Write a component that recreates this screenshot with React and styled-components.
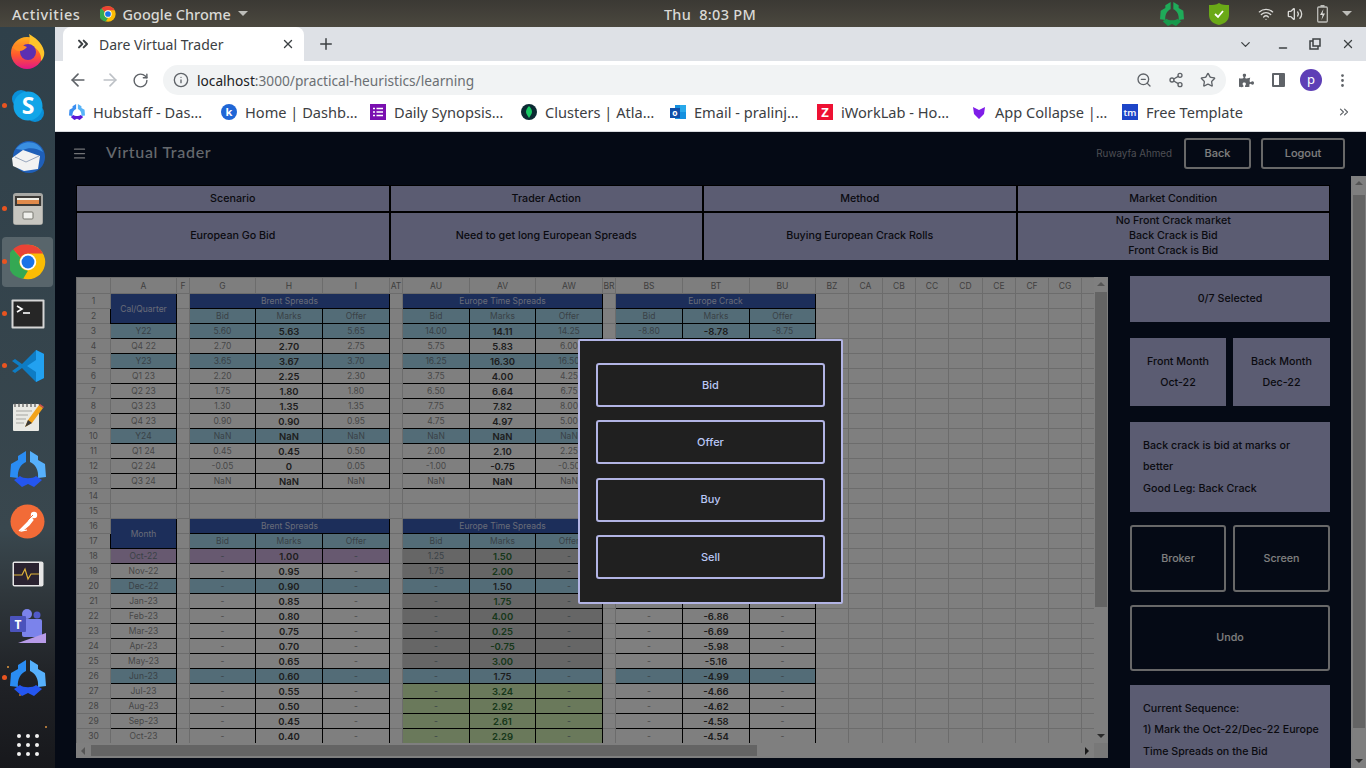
import React from "react";
import styled, { createGlobalStyle } from "styled-components";
import {
  ArrowLeft,
  ArrowRight,
  ChevronDown,
  ChevronsRight,
  Info,
  Menu,
  Minus,
  MoreVertical,
  Plus,
  RotateCw,
  Share2,
  Star,
  Volume2,
  Wifi,
  X,
  ZoomOut,
} from "lucide-react";
import { FaPuzzlePiece } from "react-icons/fa";

const GlobalStyle = createGlobalStyle`
  html, body {
    margin: 0;
    padding: 0;
    width: 1366px;
    height: 768px;
    overflow: hidden;
    background: #000;
  }
  * { box-sizing: border-box; }
`;

const UI_FONT = `"Noto Sans", "Open Sans", sans-serif`;
const APP_FONT = `Inter, "Liberation Sans", sans-serif`;

/* ---------- desktop shell ---------- */

const Desktop = styled.div`
  width: 1366px;
  height: 768px;
  display: grid;
  grid-template-columns: 55px 1fr;
  grid-template-rows: 27px 1fr;
  overflow: hidden;
`;

const TopBar = styled.div`
  grid-column: 1 / 3;
  display: grid;
  grid-template-columns: 1fr auto 1fr;
  align-items: center;
  background: linear-gradient(#3b3934, #4b483f);
  color: #d9d9d6;
  font: 500 14.5px ${UI_FONT};
  padding: 0 12px;
`;

const BarLeft = styled.div`
  display: flex;
  align-items: center;
`;

const Activities = styled.span`
  letter-spacing: 0.6px;
`;

const AppMenu = styled.div`
  display: flex;
  align-items: center;
  gap: 6px;
  margin-left: 20px;
`;

const Clock = styled.div`
  letter-spacing: 0.3px;
  padding-left: 54px;
`;

const Tray = styled.div`
  display: flex;
  align-items: center;
  justify-content: flex-end;
  padding-right: 2px;
`;

/* spacing between loose icons in a bar */
const Spaced = styled.span`
  display: flex;
  flex: none;
  margin-left: ${(p) => p.$gap}px;
`;

const Caret = styled.span`
  width: 0;
  height: 0;
  border-left: 5px solid transparent;
  border-right: 5px solid transparent;
  border-top: 5px solid #bdbdb9;
  margin-left: ${(p) => p.$gap || 1}px;
`;

const Dock = styled.div`
  display: flex;
  flex-direction: column;
  gap: 4.25px;
  position: relative;
  background:
    radial-gradient(circle at 8px 640px, #b07a3a 0 1px, transparent 1.4px),
    radial-gradient(circle at 46px 700px, #a8743a 0 1px, transparent 1.4px),
    radial-gradient(circle at 20px 668px, #8c6232 0 1px, transparent 1.4px),
    radial-gradient(circle at 38px 612px, #8c6232 0 1px, transparent 1.4px),
    linear-gradient(#2f404a 0, #39474e 68%, #30383d 76%, #202226 88%, #17181c 100%);
`;

const DockSlot = styled.div`
  position: relative;
  height: 48px;
  flex: none;
  display: flex;
  align-items: center;
  justify-content: center;
  border-radius: 4px;
  margin: ${(p) => p.$shift || 0}px 2px 0 2px;
  background: ${(p) => (p.$active ? "#58656b" : "transparent")};
  box-shadow: ${(p) => (p.$active ? "0 -1px 0 #58656b, 0 1px 0 #58656b" : "none")};
  &::before {
    content: ${(p) => (p.$running ? '""' : "none")};
    position: absolute;
    left: 0;
    top: 21px;
    width: 5px;
    height: 5px;
    border-radius: 50%;
    background: #e95420;
  }
`;

const AppGrid = styled.div`
  display: grid;
  grid-template-columns: repeat(3, 4px);
  gap: 5px;
  justify-content: center;
  margin-top: auto;
  margin-bottom: 12px;
  span {
    width: 4px;
    height: 4px;
    border-radius: 50%;
    background: #f2f2f2;
  }
`;

/* ---------- browser chrome ---------- */

const Browser = styled.div`
  display: flex;
  flex-direction: column;
  min-width: 0;
  min-height: 0;
`;

const TabStrip = styled.div`
  height: 34px;
  flex: none;
  background: #dee1e6;
  display: flex;
  align-items: center;
  padding-left: 8px;
  color: #3c4043;
`;

const Tab = styled.div`
  width: 241px;
  height: 34px;
  background: #fff;
  border-radius: 8px 8px 0 0;
  display: flex;
  align-items: center;
  padding: 0 9px 0 12px;
  font: 14px ${UI_FONT};
  gap: 8px;
`;

const TabTitle = styled.span`
  flex: 1;
  white-space: nowrap;
`;

const NewTab = styled.div`
  margin-left: 13px;
  display: flex;
`;

const WindowControls = styled.div`
  margin-left: auto;
  display: flex;
  align-items: center;
  padding-right: 11px;
`;

const MinimizeGlyph = styled.span`
  display: flex;
  margin-top: 7px;
`;

const Toolbar = styled.div`
  height: 38px;
  flex: none;
  background: #fff;
  display: flex;
  align-items: flex-start;
  padding: 4px 0 0 13px;
  color: #5f6368;
`;

const NavGroup = styled.div`
  display: flex;
  align-items: center;
  gap: 12px;
  height: 30px;
  width: 95px;
  flex: none;
`;

const Omnibox = styled.div`
  width: 1063px;
  height: 30px;
  flex: none;
  border-radius: 15px;
  background: #f1f3f4;
  display: flex;
  align-items: center;
  padding: 0 10px;
  font: 13.7px ${UI_FONT};
  gap: 8px;
`;

const Url = styled.div`
  flex: 1;
  color: #6b6f73;
  white-space: nowrap;
  b {
    font-weight: 400;
    color: #202124;
  }
`;

const OmniActions = styled.div`
  display: flex;
  gap: 16px;
  align-items: center;
  color: #5f6368;
`;

const ExtGroup = styled.div`
  display: flex;
  align-items: center;
  height: 30px;
`;

const SidePanelGlyph = styled.span`
  width: 13px;
  height: 14px;
  border: 2px solid #5f6368;
  border-right-width: 6px;
  border-radius: 1px;
`;

const Avatar = styled.span`
  width: 22px;
  height: 22px;
  border-radius: 50%;
  background: #5e3fb6;
  color: #fff;
  font: 13px/21px ${UI_FONT};
  text-align: center;
`;

const Bookmarks = styled.div`
  height: 33px;
  flex: none;
  background: #fff;
  border-bottom: 1px solid #d8dade;
  display: flex;
  align-items: center;
  padding: 0 15px 6px 14px;
  gap: 16px;
  color: #3c4043;
  font: 14.6px ${UI_FONT};
`;

const Bookmark = styled.div`
  display: flex;
  align-items: center;
  gap: 8px;
  flex: none;
`;

const BookmarkText = styled.span`
  display: block;
  white-space: nowrap;
  width: ${(p) => p.$w}px;
`;

const MoreBookmarks = styled.div`
  margin-left: auto;
  display: flex;
  color: #5f6368;
`;

/* ---------- the page ---------- */

const Page = styled.div`
  position: relative;
  flex: 1;
  min-height: 0;
  overflow: hidden;
  background: #0a142a;
  font-family: ${APP_FONT};
  display: flex;
  flex-direction: column;
`;

const AppHeader = styled.header`
  height: 44px;
  flex: none;
  display: flex;
  align-items: center;
  padding: 0 21px 2px 17px;
  color: #e6e8ee;
`;

const HeaderTitle = styled.div`
  font: 500 16px Lato, ${APP_FONT};
  letter-spacing: 0.7px;
  margin-left: 19px;
  margin-top: -3px;
  color: #ccd2dc;
`;

const UserName = styled.div`
  margin-left: auto;
  font-size: 9.8px;
  color: #9a9da6;
`;

const HeaderButton = styled.div`
  width: ${(p) => p.$w}px;
  height: 31px;
  margin-left: ${(p) => p.$gap}px;
  border: 2px solid #d0d0d0;
  border-radius: 3px;
  display: flex;
  align-items: center;
  justify-content: center;
  font-size: 11px;
  font-weight: 500;
  color: #fff;
`;

const PageBody = styled.div`
  flex: 1;
  min-height: 0;
  display: flex;
`;

const Scroller = styled.div`
  flex: 1;
  min-width: 0;
  padding: 9px 21px 0 21px;
  overflow: hidden;
`;

const ScrollTrack = styled.div`
  flex: ${(p) => (p.$horizontal ? 1 : "none")};
  width: ${(p) => (p.$horizontal ? "auto" : p.$wide ? "15px" : "14px")};
  height: ${(p) => (p.$horizontal ? "15px" : "auto")};
  background: #fff;
  display: flex;
  flex-direction: ${(p) => (p.$horizontal ? "row" : "column")};
  align-items: center;
  justify-content: space-between;
  padding: ${(p) => (p.$horizontal ? "0 5px" : "5px 0")};
  position: relative;
`;

const ScrollThumb = styled.div`
  position: absolute;
  background: #c8c8c8;
  left: ${(p) => p.$left};
  right: ${(p) => p.$right};
  top: ${(p) => p.$top};
  bottom: ${(p) => p.$bottom};
`;

const Arrow = styled.span`
  width: 0;
  height: 0;
  ${(p) =>
    p.$dir === "up" &&
    "border-left:4px solid transparent;border-right:4px solid transparent;border-bottom:4px solid #aaa;"}
  ${(p) =>
    p.$dir === "down" &&
    "border-left:4px solid transparent;border-right:4px solid transparent;border-top:4px solid #555;"}
  ${(p) =>
    p.$dir === "left" &&
    "border-top:4px solid transparent;border-bottom:4px solid transparent;border-right:4px solid #aaa;"}
  ${(p) =>
    p.$dir === "right" &&
    "border-top:4px solid transparent;border-bottom:4px solid transparent;border-left:4px solid #333;"}
`;

const InfoGrid = styled.div`
  display: grid;
  grid-template-columns: repeat(4, 1fr);
  grid-template-rows: 25px 47px;
  gap: 2px;
  padding: 1px;
  background: #000;
  width: 1254px;
  height: 75px;
`;

const InfoCell = styled.div`
  background: #b6b8e4;
  color: #15151f;
  display: flex;
  align-items: center;
  justify-content: center;
  text-align: center;
  font-size: 10.7px;
  font-weight: 500;
  line-height: 15px;
  padding-bottom: ${(p) => (p.$body ? 2 : 0)}px;
`;

const Workspace = styled.div`
  display: flex;
  gap: 22px;
  margin-top: 16px;
  width: 1254px;
`;

const Sheet = styled.div`
  width: 1032px;
  height: 481px;
  margin-top: 1px;
  flex: none;
  display: flex;
  flex-direction: column;
  background: #fff;
`;

const SheetTop = styled.div`
  display: flex;
  height: 466px;
`;

const SheetViewport = styled.div`
  width: 1018px;
  height: 466px;
  overflow: hidden;
`;

const SheetBottom = styled.div`
  display: flex;
  height: 15px;
  width: 1032px;
`;

const Corner = styled.div`
  width: 14px;
  background: #f0f0f0;
`;

const Grid = styled.table`
  border-collapse: collapse;
  table-layout: fixed;
  width: 1018px;
  font-family: ${APP_FONT};
  font-size: 8.5px;
`;

const ColHead = styled.th`
  height: 16px;
  padding: 0;
  font-weight: 400;
  font-size: 8.5px;
  color: #808080;
  background: #fdfdfd;
  border: 1px solid #d9d9d9;
  overflow: hidden;
  white-space: nowrap;
  text-align: center;
`;

const RowHead = styled.td`
  height: 15px;
  padding: 0;
  text-align: center;
  color: #8a8a8a;
  font-size: 8.5px;
  background: #fdfdfd;
  border: 1px solid #d9d9d9;
`;

const TONES = {
  navy: "#395cb4",
  teal: "#a6d9ef",
  purple: "#cfb2e0",
  dark: "#cccccc",
  green: "#d4f3b6",
};

const Cell = styled.td`
  height: 15px;
  padding: 0;
  text-align: center;
  white-space: nowrap;
  overflow: hidden;
  border: 1px solid ${(p) => (p.$boxed ? "#000" : "#d9d9d9")};
  background: ${(p) => TONES[p.$tone] || "#fff"};
  color: ${(p) =>
    p.$tone === "navy" ? "#cfd6ee" : p.$bold ? "#3c3c3c" : p.$tone ? "#74848e" : "#909090"};
  font-weight: ${(p) => (p.$bold ? 600 : 400)};
  font-size: ${(p) => (p.$bold ? "9.5px" : "8.5px")};
  ${(p) => p.$greenText && "color:#2f6f35;"}
`;

const SidePanel = styled.aside`
  width: 200px;
  flex: none;
  display: flex;
  flex-direction: column;
  font-size: 10.7px;
  font-weight: 500;
`;

const PanelRow = styled.div`
  display: grid;
  grid-template-columns: 96px 97px;
  gap: 7px;
  flex: none;
  margin-bottom: ${(p) => p.$after}px;
`;

const PanelCard = styled.div`
  flex: none;
  height: ${(p) => p.$h}px;
  margin-bottom: ${(p) => p.$after || 0}px;
  padding-bottom: ${(p) => p.$lift || 0}px;
  background: #b6b8e4;
  color: #15151f;
  display: flex;
  flex-direction: column;
  align-items: center;
  justify-content: center;
  line-height: 21px;
`;

const PanelNote = styled.div`
  height: ${(p) => p.$h}px;
  flex: none;
  margin-bottom: ${(p) => p.$after || 0}px;
  background: #b6b8e4;
  color: #15151f;
  padding: ${(p) => p.$pad}px 8px 0 13px;
  line-height: 21.5px;
`;

const PanelButton = styled.div`
  flex: none;
  height: ${(p) => p.$h}px;
  margin-bottom: ${(p) => p.$after || 0}px;
  border: 2px solid #d0d0d0;
  border-radius: 3px;
  color: #fff;
  display: flex;
  align-items: center;
  justify-content: center;
  padding-bottom: 1px;
`;

const Backdrop = styled.div`
  position: absolute;
  inset: 0;
  background: rgba(0, 0, 0, 0.5);
  display: flex;
  justify-content: center;
  align-items: flex-start;
  padding-top: 207px;
`;

const Modal = styled.div`
  width: 265px;
  height: 265px;
  background: #202020;
  border: 2px solid #b2b4e4;
  border-radius: 2px;
  padding: 22px 16px;
  display: flex;
  flex-direction: column;
  gap: 13.4px;
`;

const ModalButton = styled.div`
  height: 44px;
  flex: none;
  border: 2px solid #b2b4e4;
  border-radius: 3px;
  display: flex;
  align-items: center;
  justify-content: center;
  padding-bottom: 1px;
  color: #bac7f5;
  font-size: 11px;
  font-weight: 500;
`;

/* ---------- drawn icons ---------- */

const ChromeLogo = ({ size }) => (
  <svg width={size} height={size} viewBox="0 0 48 48">
    <circle cx="24" cy="24" r="23" fill="#fbbc04" />
    <path d="M24 1a23 23 0 0 1 20 11.5H24a11.5 11.5 0 0 0-10 5.8L4 6.9A23 23 0 0 1 24 1z" fill="#ea4335" />
    <path d="M4 6.9l10 11.4a11.5 11.5 0 0 0 10 17.2L17.5 46.3A23 23 0 0 1 4 6.9z" fill="#34a853" />
    <circle cx="24" cy="24" r="11" fill="#fff" />
    <circle cx="24" cy="24" r="8.6" fill="#1a73e8" />
  </svg>
);

const HubLogo = ({ size, left = "#2a8cf2", right = "#56b0fb", bottom = "#2456f0" }) => (
  <svg width={size} height={size} viewBox="0 0 36 36">
    <path d="M16 0 L8 5 L8 9 L1 13 L0 26 L8 27 C7 19 11 13 16 11 Z" fill={left} />
    <path d="M20 0 L28 5 L28 9 L35 13 L36 26 L28 27 C29 19 25 13 20 11 Z" fill={right} />
    <path d="M4 29 L10 25 C13 28 23 28 26 25 L32 29 L24 36 L18 33 L12 36 Z" fill={bottom} />
  </svg>
);

const dockApps = [
  {
    key: "firefox",
    icon: (
      <svg width="36" height="36" viewBox="0 0 36 36">
        <defs>
          <linearGradient id="ff" x1="0" y1="0" x2="0" y2="1">
            <stop offset="0" stopColor="#ffb01f" />
            <stop offset="0.55" stopColor="#ff5a2c" />
            <stop offset="1" stopColor="#e31587" />
          </linearGradient>
        </defs>
        <circle cx="17" cy="20" r="16" fill="url(#ff)" />
        <path d="M19 1c5 3 13 8 15 17 1 4-1 8-3 10 1-8-4-13-12-17 1-3 1-7 0-10z" fill="#ffc42a" />
        <circle cx="18" cy="19" r="8" fill="#5c2fb2" />
        <path d="M3 14c5-3 10-2 14 0-2 2-4 4-8 4-3 0-5-2-6-4z" fill="#ff8b1f" />
      </svg>
    ),
  },
  {
    key: "skype",
    running: true,
    shift: 3,
    icon: (
      <svg width="34" height="34" viewBox="0 0 34 34">
        <circle cx="10" cy="10" r="9" fill="#0a8fd8" />
        <circle cx="24" cy="24" r="9" fill="#0a8fd8" />
        <circle cx="17" cy="17" r="14.5" fill="#12a5e8" />
        <text x="17" y="25" textAnchor="middle" fontSize="23" fontWeight="700" fill="#fff" fontFamily="Open Sans">S</text>
      </svg>
    ),
  },
  {
    key: "thunderbird",
    shift: -1.5,
    icon: (
      <svg width="36" height="36" viewBox="0 0 36 36">
        <circle cx="19" cy="18" r="16" fill="#1f5fb8" />
        <path d="M6 10c6-9 22-10 27 3-6-4-14-5-20-2z" fill="#3a8fe0" />
        <path d="M2 19l11-8 17 6-2 13-14 2-11-5z" fill="#f2f2f2" />
        <path d="M5 18l11 5 13-6" fill="none" stroke="#9aa7bd" strokeWidth="1" />
      </svg>
    ),
  },
  {
    key: "files",
    running: true,
    icon: (
      <svg width="34" height="34" viewBox="0 0 34 34">
        <rect x="2" y="1" width="30" height="32" rx="3" fill="#a8a8a4" />
        <rect x="4" y="4" width="26" height="10" fill="#3d3a36" />
        <rect x="6" y="6" width="22" height="2" fill="#f0f0e8" />
        <rect x="6" y="8" width="22" height="4" fill="#e08a4a" />
        <rect x="3" y="14" width="28" height="18" fill="#c7c6c0" />
        <rect x="12" y="20" width="10" height="7" rx="1" fill="#f0f0ec" stroke="#77776f" />
      </svg>
    ),
  },
  { key: "chrome", running: true, active: true, icon: <ChromeLogo size={36} /> },
  {
    key: "terminal",
    running: true,
    icon: (
      <svg width="34" height="30" viewBox="0 0 34 30">
        <rect x="0.5" y="0.5" width="33" height="29" rx="1" fill="#d6d6d6" />
        <rect x="2.5" y="2.5" width="29" height="25" fill="#262626" />
        <path d="M6 7l5 3-5 3" fill="none" stroke="#fff" strokeWidth="1.6" />
        <path d="M12 14h7" stroke="#fff" strokeWidth="1.6" />
      </svg>
    ),
  },
  {
    key: "vscode",
    running: true,
    icon: (
      <svg width="34" height="34" viewBox="0 0 34 34">
        <path d="M25 1L11 15 4 10 1 12l7 5-7 5 3 2 7-5 14 14 8-4V5z" fill="#0e7cc4" />
        <path d="M25 1l8 4v24l-8 4V23l-9-6 9-6z" fill="#22a1f0" />
      </svg>
    ),
  },
  {
    key: "editor",
    shift: -1.5,
    icon: (
      <svg width="34" height="34" viewBox="0 0 34 34">
        <rect x="2" y="4" width="26" height="27" rx="1" fill="#e9e9e4" />
        <path d="M4 3v4M8 3v4M12 3v4M16 3v4M20 3v4M24 3v4" stroke="#555" strokeWidth="1.2" />
        <path d="M5 11h16M5 15h12M5 19h10M5 23h8" stroke="#a5a5a0" strokeWidth="1" />
        <path d="M14 27l3-7L28 5l4 3-11 15z" fill="#f2a31b" />
        <path d="M28 5l1-1 4 3-1 1z" fill="#d9534f" />
        <path d="M14 27l3-7 4 3z" fill="#3a3a3a" />
      </svg>
    ),
  },
  { key: "hubstaff", icon: <HubLogo size={36} /> },
  {
    key: "postman",
    icon: (
      <svg width="35" height="35" viewBox="0 0 35 35">
        <circle cx="17.5" cy="17.5" r="17" fill="#f26b37" />
        <path d="M9 27l9-9 3-5 2 3-4 5-7 6 5-1" fill="#fff" stroke="#fff" strokeWidth="1.2" />
        <circle cx="24" cy="11" r="3.2" fill="#fff" />
        <path d="M18 16l5-5" stroke="#f26b37" strokeWidth="1" />
      </svg>
    ),
  },
  {
    key: "sysmon",
    icon: (
      <svg width="32" height="26" viewBox="0 0 32 26">
        <rect x="0.5" y="0.5" width="31" height="25" rx="2" fill="#e6e6e6" />
        <rect x="2" y="2" width="25" height="22" fill="#2a2230" />
        <path d="M2 14h8l3-6 3 10 3-5h8" fill="none" stroke="#e0b43a" strokeWidth="1.2" />
      </svg>
    ),
  },
  {
    key: "teams",
    icon: (
      <svg width="36" height="34" viewBox="0 0 36 34">
        <circle cx="17" cy="5" r="5" fill="#7b83eb" />
        <circle cx="27" cy="6" r="3.5" fill="#5059c9" />
        <rect x="12" y="10" width="20" height="18" rx="2" fill="#7b83eb" />
        <rect x="0" y="7" width="16" height="16" rx="1" fill="#4b53bc" />
        <text x="8" y="20" textAnchor="middle" fontSize="12" fontWeight="700" fill="#fff" fontFamily="Open Sans">T</text>
        <path d="M8 34L36 24v10z" fill="#b79be8" />
      </svg>
    ),
  },
  { key: "hubstaff2", running: true, icon: <HubLogo size={36} /> },
];

const Shield = () => (
  <svg width="22" height="24" viewBox="0 0 22 24">
    <path d="M11 1c3 2 6 2 10 2v10c0 6-5 9-10 10C6 22 1 19 1 13V3c4 0 7 0 10-2z" fill="#6aa917" />
    <path d="M7 12l3 3 5-6" fill="none" stroke="#fff" strokeWidth="1.8" />
  </svg>
);

const Battery = () => (
  <svg width="11" height="18" viewBox="0 0 11 18">
    <rect x="0.7" y="2" width="9.6" height="15" rx="1" fill="none" stroke="#bdbdb9" strokeWidth="1.3" />
    <rect x="3.5" y="0" width="4" height="2" fill="#bdbdb9" />
    <path d="M6.5 4L3 10h2.5L4.5 15 8 8.5H5.5z" fill="#d9d9d6" />
  </svg>
);

const favicons = {
  hub: <HubLogo size={16} left="#3a8ef0" right="#58b4f8" bottom="#5a18d8" />,
  k: (
    <svg width="16" height="16" viewBox="0 0 16 16">
      <circle cx="8" cy="8" r="8" fill="#1f66d6" />
      <text x="8" y="12" textAnchor="middle" fontSize="11" fontWeight="700" fill="#fff" fontFamily="Open Sans">k</text>
    </svg>
  ),
  list: (
    <svg width="16" height="16" viewBox="0 0 16 16">
      <rect width="16" height="16" fill="#7a0fb0" />
      <path d="M3 4.5h2M6.5 4.5h6.5M3 8h2M6.5 8h6.5M3 11.5h2M6.5 11.5h6.5" stroke="#fff" strokeWidth="1.6" />
    </svg>
  ),
  mongo: (
    <svg width="16" height="16" viewBox="0 0 16 16">
      <circle cx="8" cy="8" r="8" fill="#0b2a33" />
      <path d="M8 2c2 2 3 4 3 6s-2 4-3 6c-1-2-3-4-3-6s1-4 3-6z" fill="#18c964" />
    </svg>
  ),
  outlook: (
    <svg width="16" height="16" viewBox="0 0 16 16">
      <rect x="5" y="1" width="11" height="14" fill="#1490df" />
      <rect x="10" y="1" width="6" height="7" fill="#28a8ea" />
      <rect x="0" y="4" width="10" height="10" fill="#0f4fa8" />
      <text x="5" y="12" textAnchor="middle" fontSize="8.5" fontWeight="700" fill="#fff" fontFamily="Open Sans">o</text>
    </svg>
  ),
  z: (
    <svg width="16" height="16" viewBox="0 0 16 16">
      <rect width="16" height="16" fill="#ee1133" />
      <text x="8" y="13" textAnchor="middle" fontSize="13" fontWeight="700" fill="#fff" fontFamily="Open Sans">Z</text>
    </svg>
  ),
  v: (
    <svg width="16" height="16" viewBox="0 0 16 16">
      <path d="M2 3l6 3 6-3-1 7-5 5-5-5z" fill="#7f1de8" />
    </svg>
  ),
  tm: (
    <svg width="16" height="16" viewBox="0 0 16 16">
      <rect width="16" height="16" fill="#1d45c8" />
      <text x="8" y="11.5" textAnchor="middle" fontSize="9.5" fontWeight="600" fill="#fff" fontFamily="Open Sans">tm</text>
    </svg>
  ),
};

const bookmarks = [
  ["hub", "Hubstaff - Das…", 112],
  ["k", "Home | Dashb…", 109],
  ["list", "Daily Synopsis…", 111],
  ["mongo", "Clusters | Atla…", 109],
  ["outlook", "Email - pralinj…", 107],
  ["z", "iWorkLab - Ho…", 114],
  ["v", "App Collapse |…", 111],
  ["tm", "Free Template", 97],
];

/* ---------- sheet data ---------- */

const COLS = [
  ["", 34], ["A", 66], ["F", 13], ["G", 66], ["H", 67], ["I", 67], ["AT", 13],
  ["AU", 67], ["AV", 66], ["AW", 67], ["BR", 13], ["BS", 67], ["BT", 67], ["BU", 66],
  ["BZ", 33], ["CA", 34], ["CB", 33], ["CC", 33], ["CD", 34], ["CE", 33], ["CF", 33], ["CG", 33], ["", 13],
];

const NAN = ["NaN", "NaN", "NaN"];
const quarters = [
  { label: "Y22", tone: "teal", brent: ["5.60", "5.63", "5.65"], time: ["14.00", "14.11", "14.25"], crack: ["-8.80", "-8.78", "-8.75"] },
  { label: "Q4 22", brent: ["2.70", "2.70", "2.75"], time: ["5.75", "5.83", "6.00"] },
  { label: "Y23", tone: "teal", brent: ["3.65", "3.67", "3.70"], time: ["16.25", "16.30", "16.50"] },
  { label: "Q1 23", brent: ["2.20", "2.25", "2.30"], time: ["3.75", "4.00", "4.25"] },
  { label: "Q2 23", brent: ["1.75", "1.80", "1.80"], time: ["6.50", "6.64", "6.75"] },
  { label: "Q3 23", brent: ["1.30", "1.35", "1.35"], time: ["7.75", "7.82", "8.00"] },
  { label: "Q4 23", brent: ["0.90", "0.90", "0.95"], time: ["4.75", "4.97", "5.00"] },
  { label: "Y24", tone: "teal", brent: NAN, time: NAN },
  { label: "Q1 24", brent: ["0.45", "0.45", "0.50"], time: ["2.00", "2.10", "2.25"] },
  { label: "Q2 24", brent: ["-0.05", "0", "0.05"], time: ["-1.00", "-0.75", "-0.50"] },
  { label: "Q3 24", brent: NAN, time: NAN },
];

const months = [
  { label: "Oct-22", tone: "purple", brent: "1.00", time: ["1.25", "1.50", "-"], timeTone: "dark", crack: "-" },
  { label: "Nov-22", brent: "0.95", time: ["1.75", "2.00", "-"], timeTone: "dark", crack: "-" },
  { label: "Dec-22", tone: "teal", brent: "0.90", time: ["-", "1.50", "-"], crack: "-" },
  { label: "Jan-23", brent: "0.85", time: ["-", "1.75", "-"], timeTone: "dark", crack: "-" },
  { label: "Feb-23", brent: "0.80", time: ["-", "4.00", "-"], timeTone: "dark", crack: "-6.86" },
  { label: "Mar-23", brent: "0.75", time: ["-", "0.25", "-"], timeTone: "dark", crack: "-6.69" },
  { label: "Apr-23", brent: "0.70", time: ["-", "-0.75", "-"], timeTone: "dark", crack: "-5.98" },
  { label: "May-23", brent: "0.65", time: ["-", "3.00", "-"], timeTone: "dark", crack: "-5.16" },
  { label: "Jun-23", tone: "teal", brent: "0.60", time: ["-", "1.75", "-"], crack: "-4.99" },
  { label: "Jul-23", brent: "0.55", time: ["-", "3.24", "-"], timeTone: "green", crack: "-4.66" },
  { label: "Aug-23", brent: "0.50", time: ["-", "2.92", "-"], timeTone: "green", crack: "-4.62" },
  { label: "Sep-23", brent: "0.45", time: ["-", "2.61", "-"], timeTone: "green", crack: "-4.58" },
  { label: "Oct-23", brent: "0.40", time: ["-", "2.29", "-"], timeTone: "green", crack: "-4.54" },
];

const Blanks = ({ n }) =>
  Array.from({ length: n }, (_, i) => <Cell key={i} />);

const Triple = ({ values = ["", "", ""], tone, timeTone }) => {
  const t = timeTone || tone;
  const green = timeTone === "green" || timeTone === "dark";
  return (
    <>
      <Cell $boxed $tone={t}>{values[0]}</Cell>
      <Cell $boxed $bold $tone={t} $greenText={green}>{values[1]}</Cell>
      <Cell $boxed $tone={t}>{values[2]}</Cell>
    </>
  );
};

const Banner = ({ title }) => (
  <Cell colSpan={3} $boxed $tone="navy">{title}</Cell>
);

const SubHead = () => (
  <>
    <Cell $boxed $tone="teal">Bid</Cell>
    <Cell $boxed $tone="teal">Marks</Cell>
    <Cell $boxed $tone="teal">Offer</Cell>
  </>
);

const SheetTable = () => (
  <Grid>
    <colgroup>
      {COLS.map(([, w], i) => (
        <col key={i} width={w} />
      ))}
    </colgroup>
    <thead>
      <tr>
        {COLS.map(([name], i) => (
          <ColHead key={i}>{name}</ColHead>
        ))}
      </tr>
    </thead>
    <tbody>
      <tr>
        <RowHead>1</RowHead>
        <Cell rowSpan={2} $boxed $tone="navy">Cal/Quarter</Cell>
        <Cell />
        <Banner title="Brent Spreads" />
        <Cell />
        <Banner title="Europe Time Spreads" />
        <Cell />
        <Banner title="Europe Crack" />
        <Blanks n={9} />
      </tr>
      <tr>
        <RowHead>2</RowHead>
        <Cell />
        <SubHead />
        <Cell />
        <SubHead />
        <Cell />
        <SubHead />
        <Blanks n={9} />
      </tr>
      {quarters.map((q, i) => (
        <tr key={q.label}>
          <RowHead>{i + 3}</RowHead>
          <Cell $boxed $tone={q.tone}>{q.label}</Cell>
          <Cell />
          <Triple values={q.brent} tone={q.tone} />
          <Cell />
          <Triple values={q.time} tone={q.tone} />
          <Cell />
          <Triple values={q.crack} tone={q.tone} />
          <Blanks n={9} />
        </tr>
      ))}
      {[14, 15].map((n) => (
        <tr key={n}>
          <RowHead>{n}</RowHead>
          <Blanks n={22} />
        </tr>
      ))}
      <tr>
        <RowHead>16</RowHead>
        <Cell rowSpan={2} $boxed $tone="navy">Month</Cell>
        <Cell />
        <Banner title="Brent Spreads" />
        <Cell />
        <Banner title="Europe Time Spreads" />
        <Cell />
        <Banner title="Europe Crack" />
        <Blanks n={9} />
      </tr>
      <tr>
        <RowHead>17</RowHead>
        <Cell />
        <SubHead />
        <Cell />
        <SubHead />
        <Cell />
        <SubHead />
        <Blanks n={9} />
      </tr>
      {months.map((m, i) => (
        <tr key={m.label}>
          <RowHead>{i + 18}</RowHead>
          <Cell $boxed $tone={m.tone}>{m.label}</Cell>
          <Cell />
          <Triple values={["-", m.brent, "-"]} tone={m.tone} />
          <Cell />
          <Triple values={m.time} tone={m.tone === "teal" ? "teal" : undefined} timeTone={m.timeTone} />
          <Cell />
          <Triple values={["-", m.crack, "-"]} tone={m.tone === "teal" ? "teal" : undefined} />
          <Blanks n={9} />
        </tr>
      ))}
    </tbody>
  </Grid>
);

export default function App() {
  return (
    <>
      <GlobalStyle />
      <Desktop>
        <TopBar>
          <BarLeft>
            <Activities>Activities</Activities>
            <AppMenu>
              <ChromeLogo size={16} />
              <span>Google Chrome</span>
              <Caret $gap={1} />
            </AppMenu>
          </BarLeft>
          <Clock>Thu&nbsp; 8:03 PM</Clock>
          <Tray>
            <HubLogo size={24} left="#1faa59" right="#1faa59" bottom="#17994c" />
            <Spaced $gap={24}><Shield /></Spaced>
            <Spaced $gap={28}><Wifi size={16} color="#d9d9d6" /></Spaced>
            <Spaced $gap={13}><Volume2 size={16} color="#d9d9d6" /></Spaced>
            <Spaced $gap={14}><Battery /></Spaced>
            <Caret $gap={14} />
          </Tray>
        </TopBar>

        <Dock>
          {dockApps.map((app) => (
            <DockSlot key={app.key} $running={app.running} $active={app.active} $shift={app.shift}>
              {app.icon}
            </DockSlot>
          ))}
          <AppGrid>
            {Array.from({ length: 9 }, (_, i) => (
              <span key={i} />
            ))}
          </AppGrid>
        </Dock>

        <Browser>
          <TabStrip>
            <Tab>
              <ChevronsRight size={16} strokeWidth={3} color="#3c4043" />
              <TabTitle>Dare Virtual Trader</TabTitle>
              <X size={14} strokeWidth={2.4} />
            </Tab>
            <NewTab>
              <Plus size={18} strokeWidth={2} />
            </NewTab>
            <WindowControls>
              <ChevronDown size={15} />
              <Spaced $gap={24}>
                <MinimizeGlyph>
                  <Minus size={12} strokeWidth={3} />
                </MinimizeGlyph>
              </Spaced>
              <Spaced $gap={20}>
                <svg width="12" height="12" viewBox="0 0 12 12">
                  <rect x="1" y="3" width="8" height="8" fill="none" stroke="#3c4043" strokeWidth="1.5" />
                  <rect x="4" y="1" width="7" height="7" fill="#dee1e6" stroke="#3c4043" strokeWidth="1.5" />
                </svg>
              </Spaced>
              <Spaced $gap={20}><X size={14} strokeWidth={2.2} /></Spaced>
            </WindowControls>
          </TabStrip>

          <Toolbar>
            <NavGroup>
              <ArrowLeft size={20} />
              <ArrowRight size={20} color="#bdc1c6" />
              <RotateCw size={17} />
            </NavGroup>
            <Omnibox>
              <Info size={16} />
              <Url>
                <b>localhost</b>:3000/practical-heuristics/learning
              </Url>
              <OmniActions>
                <ZoomOut size={16} />
                <Share2 size={16} />
                <Star size={16} />
              </OmniActions>
            </Omnibox>
            <ExtGroup>
              <Spaced $gap={13}><FaPuzzlePiece size={15} /></Spaced>
              <Spaced $gap={18}><SidePanelGlyph /></Spaced>
              <Spaced $gap={15}><Avatar>p</Avatar></Spaced>
              <Spaced $gap={12}><MoreVertical size={17} /></Spaced>
            </ExtGroup>
          </Toolbar>

          <Bookmarks>
            {bookmarks.map(([icon, text, w]) => (
              <Bookmark key={icon}>
                {favicons[icon]}
                <BookmarkText $w={w}>{text}</BookmarkText>
              </Bookmark>
            ))}
            <MoreBookmarks>
              <ChevronsRight size={14} />
            </MoreBookmarks>
          </Bookmarks>

          <Page>
            <AppHeader>
              <Menu size={15} />
              <HeaderTitle>Virtual Trader</HeaderTitle>
              <UserName>Ruwayfa Ahmed</UserName>
              <HeaderButton $w={67} $gap={12}>Back</HeaderButton>
              <HeaderButton $w={84} $gap={10}>Logout</HeaderButton>
            </AppHeader>

            <PageBody>
              <Scroller>
                <InfoGrid>
                  <InfoCell>Scenario</InfoCell>
                  <InfoCell>Trader Action</InfoCell>
                  <InfoCell>Method</InfoCell>
                  <InfoCell>Market Condition</InfoCell>
                  <InfoCell $body>European Go Bid</InfoCell>
                  <InfoCell $body>Need to get long European Spreads</InfoCell>
                  <InfoCell $body>Buying European Crack Rolls</InfoCell>
                  <InfoCell $body>
                    No Front Crack market
                    <br />
                    Back Crack is Bid
                    <br />
                    Front Crack is Bid
                  </InfoCell>
                </InfoGrid>

                <Workspace>
                  <Sheet>
                    <SheetTop>
                      <SheetViewport>
                        <SheetTable />
                      </SheetViewport>
                      <ScrollTrack>
                        <Arrow $dir="up" />
                        <ScrollThumb $left="1px" $right="1px" $top="15px" $bottom="136px" />
                        <Arrow $dir="down" />
                      </ScrollTrack>
                    </SheetTop>
                    <SheetBottom>
                      <ScrollTrack $horizontal>
                        <Arrow $dir="left" />
                        <ScrollThumb $left="15px" $right="337px" $top="2px" $bottom="2px" />
                        <Arrow $dir="right" />
                      </ScrollTrack>
                      <Corner />
                    </SheetBottom>
                  </Sheet>

                  <SidePanel>
                    <PanelCard $h={46} $after={16} $lift={2}>0/7 Selected</PanelCard>
                    <PanelRow $after={16}>
                      <PanelCard $h={68}>
                        <span>Front Month</span>
                        <span>Oct-22</span>
                      </PanelCard>
                      <PanelCard $h={68}>
                        <span>Back Month</span>
                        <span>Dec-22</span>
                      </PanelCard>
                    </PanelRow>
                    <PanelNote $h={90} $after={13} $pad={12.5}>
                      Back crack is bid at marks or
                      <br />
                      better
                      <br />
                      Good Leg: Back Crack
                    </PanelNote>
                    <PanelRow $after={13}>
                      <PanelButton $h={67}>Broker</PanelButton>
                      <PanelButton $h={67}>Screen</PanelButton>
                    </PanelRow>
                    <PanelButton $h={66} $after={14}>Undo</PanelButton>
                    <PanelNote $h={120} $pad={12.5}>
                      Current Sequence:
                      <br />
                      1) Mark the Oct-22/Dec-22 Europe
                      <br />
                      Time Spreads on the Bid
                    </PanelNote>
                  </SidePanel>
                </Workspace>
              </Scroller>
              <ScrollTrack $wide>
                <Arrow $dir="up" />
                <ScrollThumb $left="2px" $right="1px" $top="19px" $bottom="40px" />
                <Arrow $dir="down" />
              </ScrollTrack>
            </PageBody>

            <Backdrop>
              <Modal>
                <ModalButton>Bid</ModalButton>
                <ModalButton>Offer</ModalButton>
                <ModalButton>Buy</ModalButton>
                <ModalButton>Sell</ModalButton>
              </Modal>
            </Backdrop>
          </Page>
        </Browser>
      </Desktop>
    </>
  );
}
